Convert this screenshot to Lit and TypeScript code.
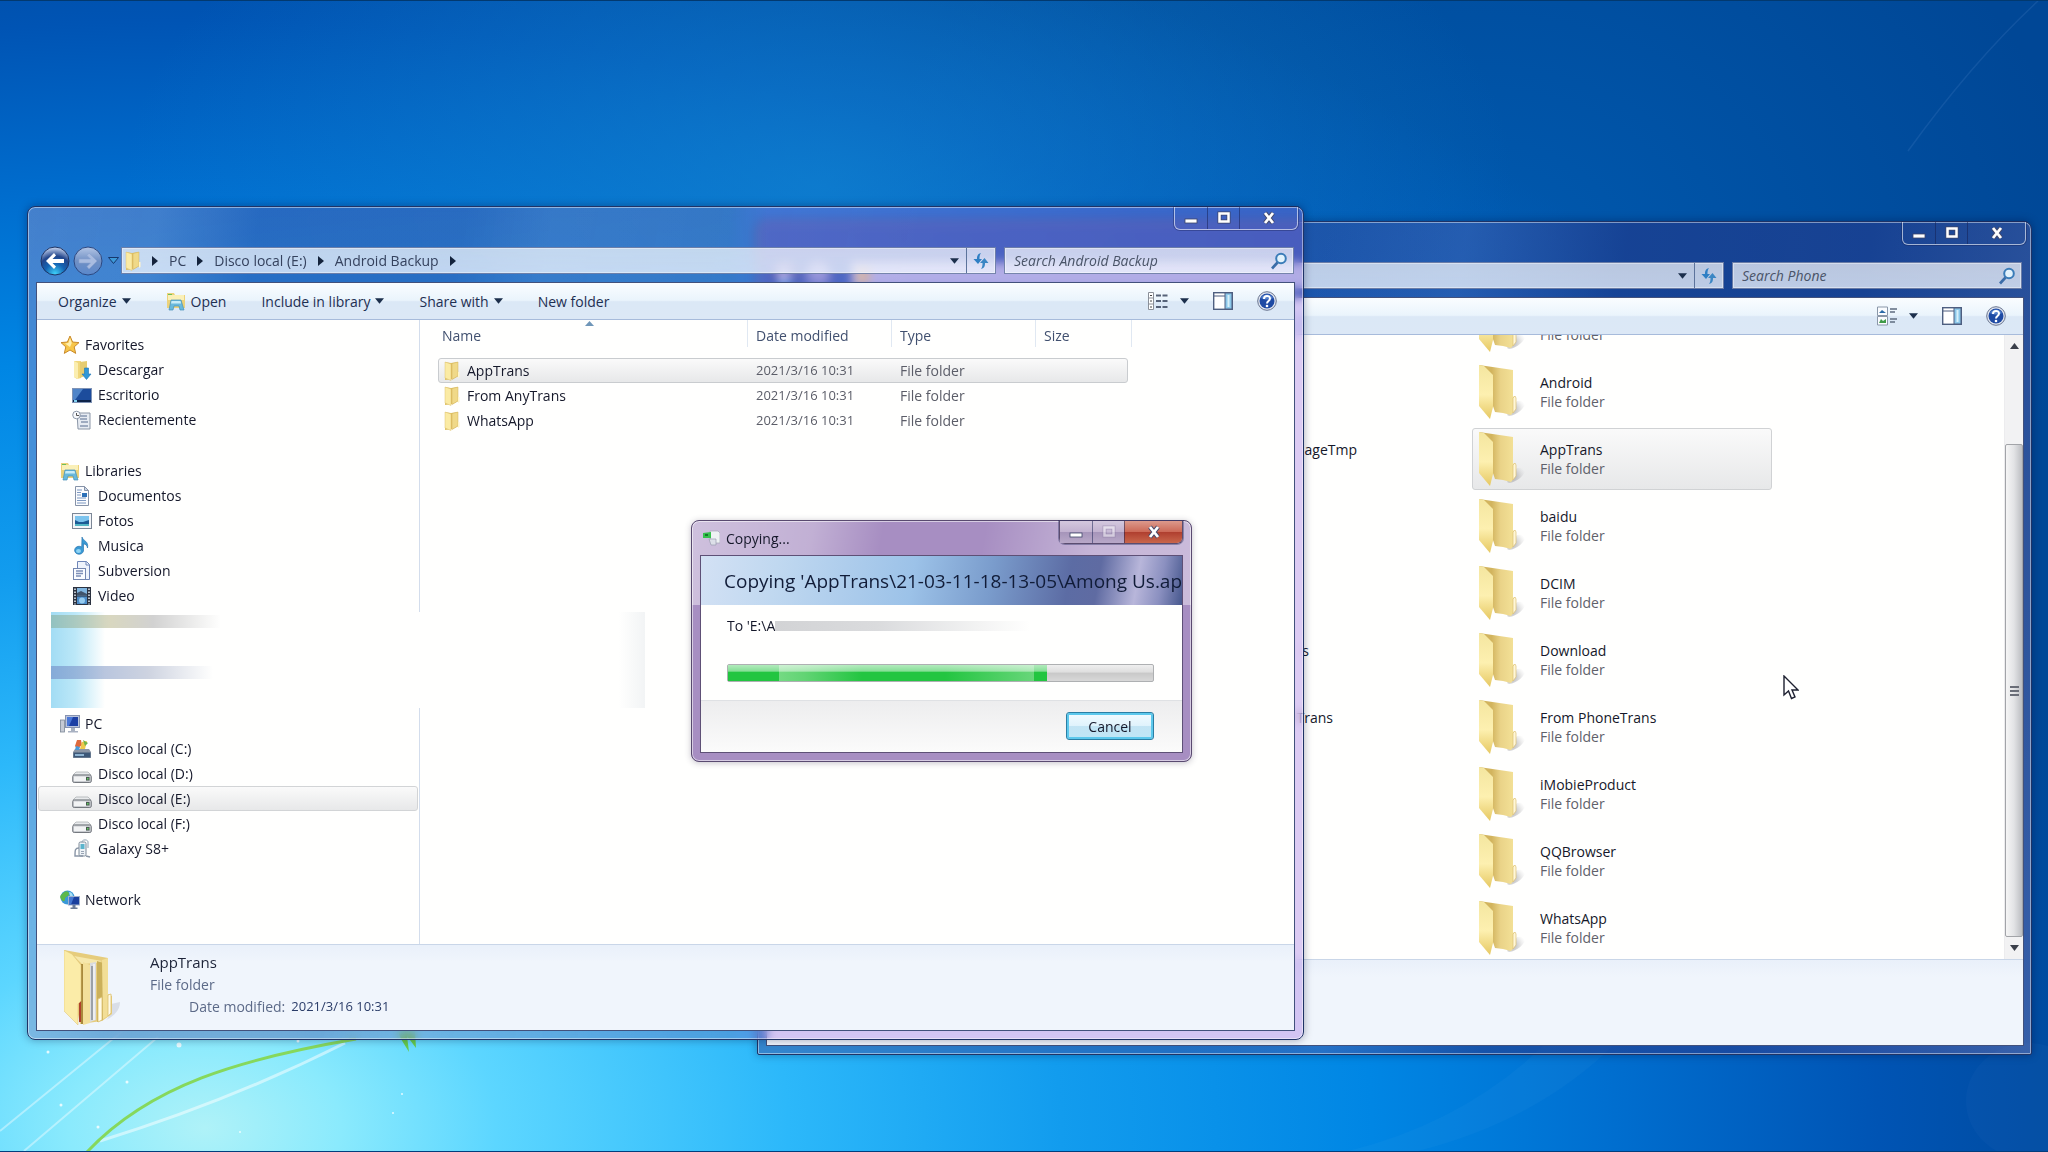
import { LitElement, html, svg, css, nothing, TemplateResult } from "lit";
import { customElement, state } from "lit/decorators.js";
import { classMap } from "lit/directives/class-map.js";

type Row = { icon: string; label: string; root?: boolean };

const FAVORITES: Row[] = [
  { icon: "star", label: "Favorites", root: true },
  { icon: "download", label: "Descargar" },
  { icon: "desktop", label: "Escritorio" },
  { icon: "recent", label: "Recientemente" },
];
const LIBRARIES: Row[] = [
  { icon: "library", label: "Libraries", root: true },
  { icon: "doc", label: "Documentos" },
  { icon: "photo", label: "Fotos" },
  { icon: "music", label: "Musica" },
  { icon: "subversion", label: "Subversion" },
  { icon: "video", label: "Video" },
];
const COMPUTER: Row[] = [
  { icon: "pc", label: "PC", root: true },
  { icon: "system", label: "Disco local (C:)" },
  { icon: "drive", label: "Disco local (D:)" },
  { icon: "drive", label: "Disco local (E:)" },
  { icon: "drive", label: "Disco local (F:)" },
  { icon: "phone", label: "Galaxy S8+" },
];
const NETWORK: Row[] = [{ icon: "network", label: "Network", root: true }];

const FILES = ["AppTrans", "From AnyTrans", "WhatsApp"];

// Each row holds the tail of the covered first column (with its right edge) and the second column's folder.
const TILES: { tail?: string; edge?: number; name: string }[] = [
  { name: "" },
  { name: "Android" },
  { name: "AppTrans", tail: "ageTmp", edge: 590 },
  { name: "baidu" },
  { name: "DCIM" },
  { name: "Download", tail: "s", edge: 542 },
  { name: "From PhoneTrans", tail: "Trans", edge: 566 },
  { name: "iMobieProduct" },
  { name: "QQBrowser" },
  { name: "WhatsApp" },
];

const GLYPHS: Record<string, TemplateResult> = {
  star: svg`<path d="M10 1l2.600 6 6.400.6-4.800 4.300 1.500 6.500L10 15l-5.700 3.400 1.500-6.500L1 7.600 7.400 7z" fill="#f7c64a" stroke="#c98a2b"/><path d="M10 3l1.800 5-1.800 4-5-3.500 3.400-.5z" fill="#fff0b0"/>`,
  download: svg`<path d="M2 1l7 0v17l-4 1-3-2z" fill="#f0d77c"/><path d="M2 1l4 2v16l-4-2z" fill="#fbeeb0"/><path d="M8 2l7-1v14l-7 3z" fill="#e6cc70"/><path d="M12.500 8h4v6h2.500L14.500 19.500 10 14h2.500z" fill="#2f97d8" stroke="#1d74b4" stroke-width=".6"/>`,
  desktop: svg`<rect x=".5" y="3.500" width="19" height="14" fill="#1c4c9c" stroke="#7f93b5"/><path d="M1 4h10L3 15H1z" fill="#4f84c8"/><path d="M1 15h18v2H1z" fill="#0d2348"/><rect x="2" y="15" width="3" height="2" fill="#7fd0f0"/>`,
  recent: svg`<path d="M5 3h13v16H6z" fill="#e6ebf2" stroke="#8b96a6"/><path d="M8 6h7M8 9h7M9 12h7M8 16h8" stroke="#8796b0" stroke-width="1.400"/><circle cx="4.500" cy="5" r="3.800" fill="#f7f9fc" stroke="#8d98a8"/><path d="M4.500 3v2.500H7" stroke="#555" fill="none"/>`,
  library: svg`<path d="M1 2h7l1 2h10v13H1z" fill="#ecd27a"/><path d="M2 4h16v5H2z" fill="#faf0b8"/><path d="M2 3h4v1H2z" fill="#6cbf5a"/><path d="M5 9h10l3 10h-4l-1-4H8l-1 4H3z" fill="#68b9dc" stroke="#4890b8" stroke-width=".7"/><path d="M5.500 10h9l.6 2.500H5z" fill="#c7ecf8"/>`,
  doc: svg`<path d="M3.500.5h9l4 4v15h-13z" fill="#fbfcfe" stroke="#8693a8"/><path d="M12.500.5v4h4z" fill="#cbd6e6" stroke="#8693a8"/><path d="M5 4h5M5 6.500h4M5 9h4M5 12h9M5 14.500h9M5 17h9" stroke="#7d98c0"/><rect x="10" y="7" width="5" height="4" fill="#2b70b8"/>`,
  photo: svg`<rect x=".5" y="2.500" width="19" height="15" fill="#f3f5f8" stroke="#7c8796"/><rect x="3" y="5" width="14" height="10" fill="#7cc4ee"/><path d="M3 9l4 2 4 0 6-2v6H3z" fill="#1c5a94"/><path d="M3 13h14v2H3z" fill="#53b6c4"/>`,
  music: svg`<path d="M10 1c1 4 7 4 5.500 11-.5-3-2-4-4-4v7a4.500 4 0 1 1-1.800-4z" fill="#3a9ad4" stroke="#1f6ca8" stroke-width=".6"/><ellipse cx="6.500" cy="15" rx="2.500" ry="2" fill="#8fd4f4"/>`,
  subversion: svg`<path d="M5.500.5h9l3 3v15h-12z" fill="#eef3fb" stroke="#6f86b8"/><path d="M14 .5v3.500h3.500" fill="none" stroke="#6f86b8"/><rect x="1.500" y="7.500" width="12" height="11" fill="#fafcff" stroke="#7487b0"/><path d="M4 10h7M4 12.500h7M4 15h5" stroke="#7d8fb8" stroke-width="1.400"/>`,
  video: svg`<rect x="1" y="1" width="18" height="18" fill="#2b3240"/><rect x="5" y="2" width="10" height="7.500" fill="#7fb5e0"/><rect x="5" y="10.500" width="10" height="7.500" fill="#4c8cc8"/><path d="M5 7l4-2 6 3v1.500H5z" fill="#40546c"/><circle cx="10" cy="14.500" r="3" fill="#96ccf0"/><path d="M3 2.500v16M17 2.500v16" stroke="#dfe6ee" stroke-width="1.600" stroke-dasharray="1.500 1.500"/>`,
  pc: svg`<rect x=".5" y="6" width="4" height="12" fill="#c5cad4" stroke="#7c8796" stroke-width=".8"/><rect x="5.500" y="1.500" width="14" height="12" fill="#b9c4dc" stroke="#8793b0"/><rect x="7" y="3" width="11" height="9" fill="#1c3fa4"/><path d="M7 3h6l-4 9H7z" fill="#4a77d6"/><path d="M11 14h4v3h3v1.500H8V17h3z" fill="#a9b2c2"/>`,
  system: svg`<path d="M3 10h14l2 3v6H1v-6z" fill="#8b95a4"/><path d="M1.500 13.500h17v5h-17z" fill="#3d5878"/><path d="M3 16h9" stroke="#a8d0ee" stroke-width="1.500"/><path d="M5 1l4 0 1 5-5 4-2-3z" fill="#de6a3c"/><path d="M10 3l5-1-2 8H8z" fill="#edc94c"/><path d="M11 1l5 3-3 3z" fill="#74b54a"/><path d="M4 7l4 1-1 3H3z" fill="#4a9ad8"/>`,
  drive: svg`<path d="M4 8h12l3 3H1z" fill="#e8eaec" stroke="#a5a9ae" stroke-width=".7"/><rect x=".7" y="11" width="18.600" height="7.500" rx="1.500" fill="#c9ccd0" stroke="#75797f"/><path d="M2 12.500h12v4.500H2z" fill="#f2f3f4"/><rect x="14" y="13" width="3.500" height="3.500" fill="#4a5a50"/><rect x="15" y="14" width="1.500" height="1.500" fill="#5fd060"/>`,
  phone: svg`<rect x="7" y="3" width="7" height="14" rx="1.500" fill="#edf2f6" stroke="#7d8a98"/><path d="M10 3c0-3 7-3 6 1v5" fill="none" stroke="#8ea0b0"/><rect x="8.500" y="5" width="4" height="5" fill="#5bb4cc"/><path d="M7 9c-4 0-4 2-4 8h8M14 17l4 1" fill="none" stroke="#8a96a6" stroke-width="1.400"/><path d="M9 12.500h3M9 14.500h3" stroke="#98a4b4"/>`,
  network: svg`<circle cx="7.500" cy="7.500" r="7" fill="#3a98d8"/><path d="M3 3c3-3 6-2 6 1s-4 2-4 5-2 3-4 0 0-4 2-6z" fill="#5cb84a"/><path d="M9 2c3 0 4 3 4 5l-3-1z" fill="#a8e0f4"/><rect x="8.500" y="6.500" width="11" height="8.500" fill="#193f9e" stroke="#9fb0cc"/><path d="M9 7h5l-3 7.500H9z" fill="#4276d0"/><path d="M12.500 15h3v2.500h2V19h-7v-1.500h2z" fill="#6b7c98"/>`,
  folder: svg`<path d="M3 1l6 1 7-1v14l-5 3-8 1z" fill="#dfc060"/><path d="M3 1l6 2v16.500L3 17z" fill="#fbeba4" stroke="#dcc070" stroke-width=".5"/><path d="M10 2.500l6-1.500v14l-6 3.500z" fill="#f0d988" stroke="#d0b25c" stroke-width=".5"/><path d="M16 11h1.500v5L16 17z" fill="#fff6cc"/>`,
};

const icon = (name: string) =>
  html`<svg class="icon" viewBox="0 0 20 20" aria-hidden="true">${GLYPHS[name]}</svg>`;

const down = html`<svg class="down" viewBox="0 0 10 6" aria-hidden="true"><path d="M0 0h10L5 6z" fill="#1c2f4c"/></svg>`;
const crumbArrow = html`<svg class="crumb-arrow" viewBox="0 0 6 10" aria-hidden="true"><path d="M0 0l6 5-6 5z" fill="#14233c"/></svg>`;

const bigFolder = html`<svg class="big-folder" viewBox="0 0 48 56" aria-hidden="true">
  <defs>
    <linearGradient id="flap" x1="0" y1="0" x2="0" y2="1"><stop offset="0" stop-color="#f4e6a0"/><stop offset=".55" stop-color="#fdf0b0"/><stop offset="1" stop-color="#e6c862"/></linearGradient>
    <linearGradient id="back" x1="0" y1="0" x2="1" y2="0"><stop offset=".35" stop-color="#d2b45e"/><stop offset=".6" stop-color="#ead388"/><stop offset="1" stop-color="#f4e298"/></linearGradient>
    <radialGradient id="cast" cx=".2" cy=".6" r=".8"><stop offset="0" stop-color="#7c7c80" stop-opacity=".7"/><stop offset="1" stop-color="#b0b0b4" stop-opacity="0"/></radialGradient>
  </defs>
  <path d="M28 51l10-14 9-1c1 6-8 15-17 16z" fill="url(#cast)"/>
  <path d="M0 1l34 5v26l2 2v12l-4 5-8-2-8-1z" fill="url(#back)"/>
  <path d="M34 34l2-2 1 2v11l-3 4z" fill="#fff7d8" stroke="#dcc074" stroke-width=".7"/>
  <path d="M0 1l5 1 9 9v32l-3 12L0 42z" fill="url(#flap)"/>
</svg>`;

const fullFolder = html`<svg class="full-folder" viewBox="0 0 56 76" aria-hidden="true">
  <path d="M44 68l3-14 9-2c0 8-6 14-14 18z" fill="#bcc4d0" opacity=".45"/>
  <path d="M0 0l44 8v36l4 2v18l-10 7-22 3z" fill="#e6cc7c"/>
  <path d="M10 6l28 5-6 2-14 1z" fill="#f6e8ac"/>
  <path d="M17 14h2v60h-2z" fill="#a98a3c"/>
  <path d="M15 48h2v24h-2z" fill="#b0402c"/>
  <path d="M19 12l7 3v58l-7 2z" fill="#f3e09a"/>
  <path d="M26 13l6-1v58l-6 2z" fill="#d9dbde"/>
  <path d="M28 16v54" stroke="#9aa0a8" stroke-width="2"/>
  <path d="M30 14v56" stroke="#f4f4f4" stroke-width="1.500"/>
  <path d="M33 11l6 2v57l-6 2z" fill="#cbb05a"/>
  <path d="M38 10l6-2v58l-5 3z" fill="#f2de96"/>
  <path d="M34 49l4-2v23l-4 2zM44 45l3-1v19l-3 3z" fill="#fffbe8" stroke="#dcc070" stroke-width=".8"/>
  <path d="M0 0l8 4 9 11v36l-3 3v21L0 61z" fill="#fbeca8" stroke="#dcc070" stroke-width=".5"/>
</svg>`;

@customElement("app-root")
export class AppRoot extends LitElement {
  @state() private drive = "Disco local (E:)";
  @state() private file = "AppTrans";
  @state() private progress = 75;

  static styles = css`
    :host {
      display: block;
      position: relative;
      height: 100vh;
      overflow: hidden;
      box-sizing: border-box;
      border-top: 1px solid #02396f;
      border-bottom: 1px solid #023e7c;
      font: 14px/19px "Open Sans", "Noto Sans", sans-serif;
      color: #15182a;
      background:
        radial-gradient(ellipse 34% 34% at 40% 16%, rgba(22, 140, 214, 0.6), rgba(22, 140, 214, 0) 100%),
        radial-gradient(ellipse 30% 40% at 72% 22%, rgba(0, 108, 200, 0.5), rgba(0, 108, 200, 0) 100%),
        radial-gradient(ellipse 95% 112% at 10% 98%, #aff2f8 0%, #8aeafd 7%, #5cd6ff 15%, #2cb8fa 30%, #129cee 44%, #0086e4 60%, #006fd0 72%, #0054b4 86%, #004796 100%);
    }
    *, *::before, *::after { box-sizing: border-box; }
    button, input { font: inherit; color: inherit; margin: 0; }
    button { border: 0; padding: 0; background: none; }
    a { color: inherit; text-decoration: none; }
    svg { display: block; flex: none; }
    .stalk { position: absolute; left: 0; bottom: 0; width: 460px; height: 140px; }
    .streaks { position: absolute; right: 0; top: 0; width: 300px; height: 200px; }
    .beam { position: absolute; right: 0; bottom: 0; width: 700px; height: 110px; }

    .window {
      position: absolute;
      display: flex;
      flex-direction: column;
      border: 1px solid #1f3366;
      border-radius: 8px;
      box-shadow: inset 0 0 0 1px rgba(255, 255, 255, 0.45), 0 0 8px rgba(0, 10, 50, 0.35);
    }
    .front {
      left: 27px; top: 205px; right: 744px; bottom: 111px;
      background:
        linear-gradient(100deg, rgba(255, 255, 255, 0.12) 0, rgba(255, 255, 255, 0.1) 130px, rgba(0, 40, 140, 0.1) 230px, rgba(0, 40, 140, 0.1) 430px, rgba(255, 255, 255, 0.04) 520px, rgba(255, 255, 255, 0) 900px),
        linear-gradient(90deg, rgba(110, 110, 180, 0.38) 0, rgba(110, 110, 180, 0.38) 700px, rgba(155, 106, 224, 0.35) 740px);
      backdrop-filter: blur(5px);
    }
    .back {
      left: 757px; top: 220px; right: 16px; bottom: 96px;
      background:
        linear-gradient(100deg, rgba(255, 255, 255, 0) 560px, rgba(80, 140, 220, 0.18) 700px, rgba(0, 20, 100, 0.2) 860px, rgba(0, 20, 100, 0.15) 1100px, rgba(255, 255, 255, 0.12) 100%),
        rgba(60, 70, 150, 0.45);
      border-radius: 8px 8px 2px 2px;
    }
    .caption { display: flex; justify-content: flex-end; align-items: flex-start; height: 40px; padding-right: 5px; }
    .caption-box {
      display: flex; height: 23px; border: 1px solid rgba(255, 255, 255, 0.6); border-top: 0;
      border-radius: 0 0 6px 6px; box-shadow: 0 0 0 1px rgba(20, 30, 80, 0.35);
    }
    .cap { display: grid; place-items: center; width: 32px; }
    .cap + .cap { border-left: 1px solid rgba(20, 30, 80, 0.5); }
    .cap.close { width: 58px; }
    .nav { display: flex; align-items: center; height: 27px; margin-bottom: 8px; padding: 0 9px 0 12px; }
    .round { width: 30px; height: 30px; margin-right: 3px; }
    .history { display: grid; place-items: center; width: 14px; height: 20px; margin-right: 1px; }
    .address, .search {
      display: flex; align-items: center; height: 27px;
      background: linear-gradient(rgba(255, 255, 255, 0.7), rgba(240, 246, 255, 0.76));
      border: 1px solid rgba(70, 90, 140, 0.7); box-shadow: inset 0 0 0 1px rgba(255, 255, 255, 0.4);
    }
    .address { flex: 1; padding-left: 1px; color: #35425e; min-width: 0; }
    .address .icon { margin-right: 9px; }
    .crumb { display: flex; align-items: center; gap: 11px; margin-right: 11px; }
    .crumb-arrow { width: 6px; height: 10px; }
    .crumb-first { margin-right: 11px; }
    .spacer { flex: 1; }
    .drop { display: grid; place-items: center; width: 24px; height: 25px; }
    .refresh { display: grid; place-items: center; width: 29px; height: 25px; border-left: 1px solid #5c739c; }
    .search { width: 290px; margin-left: 8px; padding: 0 5px 0 9px; }
    .search-input { flex: 1; min-width: 0; border: 0; padding: 0; background: none; outline: 0; font-style: italic; }
    .search-input::placeholder { color: #4a5468; opacity: 1; }
    .lens { width: 18px; height: 18px; }
    .content {
      flex: 1; min-height: 0; display: flex; flex-direction: column; margin: 0 8px 8px;
      border: 1px solid #42517c; background: #fffffe; overflow: hidden;
    }
    .back .content { margin-right: 7px; }
    .toolbar {
      display: flex; align-items: center; gap: 35px; height: 37px; flex: none; padding: 0 17px 0 21px; color: #1e2f52;
      background: linear-gradient(#fafdff 0, #eaf4fc 48%, #dbe8f6 52%, #dce8f6 100%);
      border-bottom: 1px solid #a7bbdb;
    }
    .tool { display: flex; align-items: center; gap: 5px; white-space: nowrap; }
    .down { width: 9px; height: 6px; }
    .views { display: flex; align-items: center; gap: 24px; margin-left: auto; }
    .view { display: flex; align-items: center; gap: 12px; }
    .body { flex: 1; min-height: 0; display: flex; }
    .icon { width: 20px; height: 20px; }

    .sidebar { width: 383px; flex: none; padding-top: 12px; border-right: 1px solid #d3ddec; position: relative; }
    .group { margin: 0 1px 26px; padding: 0; list-style: none; }
    .group.tight { margin-bottom: 4px; }
    .node {
      display: flex; align-items: center; gap: 6px; height: 25px; padding-left: 33px;
      border: 1px solid transparent; border-radius: 3px; white-space: nowrap;
    }
    .node.root { padding-left: 21px; gap: 5px; }
    .selected { border-color: #d2d4d6; background: linear-gradient(#fafafa, #e7e8e9); }
    .smear {
      position: relative; width: 594px; height: 96px; margin: 0 0 3px 14px;
      background:
        linear-gradient(90deg, rgba(120, 150, 205, 0.7), rgba(165, 175, 200, 0.55) 60%, rgba(200, 205, 215, 0)) 0 54px / 162px 13px no-repeat,
        linear-gradient(90deg, rgba(140, 185, 175, 0.75), rgba(200, 198, 165, 0.7) 35%, rgba(190, 190, 190, 0.7) 60%, rgba(210, 210, 210, 0)) 0 3px / 170px 13px no-repeat,
        linear-gradient(90deg, rgba(243, 245, 246, 0), #f2f4f5) 100% 0 / 26px 96px no-repeat,
        linear-gradient(90deg, #a2dcf4, #bce8f8 45%, rgba(255, 255, 254, 0)) 0 0 / 54px 96px no-repeat,
        #fffffe;
    }
    .files { flex: 1; padding-left: 18px; min-width: 0; }
    .table { display: block; border-spacing: 0; width: 694px; }
    .thead, .tbody { display: block; }
    .tr { display: grid; grid-template-columns: 310px 144px 144px 1fr; align-items: center; }
    .thead .tr { height: 31px; margin-bottom: 7px; color: #41506f; position: relative; }
    .th { font-weight: normal; text-align: left; padding: 6px 0 0 8px; height: 27px; align-self: start; border-right: 1px solid #e0e8f2; }
    .th:first-child { padding-left: 4px; }
    .sort { position: absolute; left: 147px; top: 1px; width: 9px; height: 5px; }
    .tbody .tr { width: 690px; height: 25px; border: 1px solid transparent; border-radius: 3px; }
    .tbody .tr.selected { border-color: #c9cccf; }
    .td { padding: 0 0 0 7px; color: #5b5d68; }
    .td:first-child { display: flex; align-items: center; gap: 5px; padding-left: 3px; color: #15182a; }
    .date { font-size: 13px; }
    .details {
      flex: none; height: 86px; display: flex; align-items: flex-start; gap: 30px; padding: 5px 0 0 27px;
      border-top: 1px solid #c9d6e8; background: linear-gradient(#e9f0fa, #f0f5fc 20%, #f0f5fc);
    }
    .full-folder { width: 56px; height: 76px; }
    .facts { display: grid; row-gap: 3px; margin: 3px 0 0; color: #5c6a88; }
    .fact-name { font-size: 15px; color: #1c2338; }
    .fact-date { display: flex; gap: 6px; padding-left: 39px; }
    .fact-value { color: #2a3c68; font-size: 13px; }

    .tiles {
      flex: 1; min-width: 0; overflow: hidden; display: grid; grid-template-columns: 705px 300px;
      grid-auto-rows: 62px; row-gap: 5px; align-content: end;
    }
    .tail { padding-top: 12px; text-align: right; }
    .tile {
      grid-column: 2; display: flex; align-items: center; gap: 13px; padding-left: 6px;
      border: 1px solid transparent; border-radius: 3px;
    }
    .tile.selected { border-color: #d0d2d4; }
    .big-folder { width: 48px; height: 56px; }
    .tile-name, .tile-kind { display: block; min-height: 19px; text-align: left; }
    .tile-kind { color: #5f616b; }
    .scrollbar { width: 19px; display: flex; flex-direction: column; align-items: center; background: #f2f2f3; border-left: 1px solid #ececee; }
    .scroll-end { display: grid; place-items: center; height: 22px; width: 100%; }
    .scroll-gap { height: 87px; }
    .thumb {
      flex: 1; width: 100%; display: grid; place-items: center; border: 1px solid #a2a4a8; border-radius: 2px;
      background: linear-gradient(90deg, #f6f6f6, #e2e3e5 50%, #bcbec2);
    }

    .dialog {
      position: absolute; left: 691px; top: 519px; width: 501px; padding: 0 8px 8px;
      border: 1px solid #594a70; border-radius: 8px;
      box-shadow: inset 0 0 0 1px rgba(255, 255, 255, 0.55), 0 1px 6px rgba(60, 50, 80, 0.3);
      background:
        linear-gradient(100deg, rgba(255, 255, 255, 0.45) 0, rgba(255, 255, 255, 0.3) 120px, rgba(255, 255, 255, 0) 190px, rgba(255, 255, 255, 0) 290px, rgba(255, 255, 255, 0.35) 400px, rgba(255, 255, 255, 0.4)) 0 0 / 100% 84px no-repeat,
        #a78ec2;
    }
    .dialog-bar { display: flex; height: 34px; padding-left: 2px; }
    .dialog-title { display: flex; align-items: center; gap: 6px; flex: 1; margin: 0; font-size: 14px; font-weight: normal; }
    .dialog .caption-box { border-color: #5b4d70; }
    .dialog .close { background: linear-gradient(#dc9a8c 0, #cc6a58 48%, #b04030 52%, #c9664c 100%); border-radius: 0 0 5px 0; }
    .dialog .cap:not(.close) { background: linear-gradient(#d4c8de 0, #c2b2d0 48%, #a695ba 52%, #b8a8c8 100%); }
    .dialog-body { border: 1px solid #5e5076; background: #fffffe; }
    .banner {
      height: 49px; padding: 0 0 0 23px; margin: 0; white-space: nowrap; font-size: 19px; font-weight: normal; line-height: 50px; color: #111c38;
      background: linear-gradient(100deg, #d3e1f4 0, #c0d8f0 16%, #9cc2e8 44%, #7a9ccc 60%, #5c6ca4 76%, #5f6ba2 82%, #b8b6da 90%, #8b90c0 95%, #47588e 100%);
    }
    .transfer { height: 95px; padding: 11px 28px 0 26px; }
    .to { display: flex; align-items: center; height: 19px; margin: 0 0 29px; }
    .to-smear { width: 255px; height: 10px; background: linear-gradient(90deg, #d2d3d5, #dadbdd 40%, #fffffe); }
    .progress {
      height: 18px; border: 1px solid #aeb0b2; border-radius: 2px;
      background: linear-gradient(#efefef 0, #dedede 45%, #c8c8c8 50%, #d8d8d8 100%);
    }
    .fill {
      height: 100%;
      background:
        linear-gradient(rgba(255, 255, 255, 0.65), rgba(255, 255, 255, 0.45) 38%, rgba(255, 255, 255, 0) 46%),
        linear-gradient(90deg, #22c540 0, #22c540 16%, #74da83 16%, #62d474 24%, #23c541 42%, #23c541 68%, #68d67a 96%, #22c540 96%);
    }
    .dialog-foot { display: flex; justify-content: flex-end; height: 52px; padding: 11px 28px 0; background: linear-gradient(#ededee, #fbfbfb); border-top: 1px solid #dfe1e4; }
    .cancel {
      width: 88px; height: 28px; border: 1px solid #2b7ea4; border-radius: 3px;
      background: linear-gradient(#f2fbff 0, #e0f3fc 48%, #c2e4f4 52%, #bfe6f6 100%);
      box-shadow: inset 0 0 0 2px #5cc8ec;
    }
    .cursor { position: absolute; left: 1783px; top: 674px; width: 16px; height: 25px; }
  `;

  private captions(muted = false) {
    return html`<div class="caption-box">
      <button class="cap" aria-label="Minimize"><svg width="14" height="14" viewBox="0 0 14 14"><rect x="1" y="8" width="12" height="4" fill="#fff" stroke="#3d4468" stroke-width=".8"/></svg></button>
      <button class="cap" aria-label="Maximize"><svg width="14" height="14" viewBox="0 0 14 14" opacity=${muted ? 0.5 : 1}><rect x="2.500" y="2.500" width="9" height="8" fill=${muted ? "#cfc4dc" : "none"} stroke=${muted ? "#8a7ca2" : "#3d4468"} stroke-width="4"/><rect x="2.500" y="2.500" width="9" height="8" fill="none" stroke="#fff" stroke-width="2.500"/></svg></button>
      <button class="cap close" aria-label="Close"><svg width="16" height="14" viewBox="0 0 16 14"><path d="M4 2l8 10M12 2l-8 10" stroke="#444a6c" stroke-width="4.500"/><path d="M4 2l8 10M12 2l-8 10" stroke="#fff" stroke-width="2.800"/></svg></button>
    </div>`;
  }

  private nav(crumbs: string[], placeholder: string) {
    return html`<div class="nav">
      <button class="round" aria-label="Back"><svg viewBox="0 0 30 30"><defs><radialGradient id="orb" cx=".5" cy=".95" r=".9"><stop offset="0" stop-color="#3fd0f8"/><stop offset=".4" stop-color="#1464b4"/><stop offset=".7" stop-color="#23468c"/><stop offset="1" stop-color="#b4c4e4"/></radialGradient></defs><circle cx="15" cy="15" r="14" fill="url(#orb)" stroke="#1f3564"/><path d="M6 15l8-8 2 2.500-3.500 3.500H24v4H12.500l3.500 3.500-2 2.500z" fill="#fff"/></svg></button>
      <button class="round" aria-label="Forward"><svg viewBox="0 0 30 30"><defs><linearGradient id="orb2" x1="0" y1="0" x2="0" y2="1"><stop offset="0" stop-color="#b4c6e6"/><stop offset=".5" stop-color="#7090c4"/><stop offset="1" stop-color="#5a88cc"/></linearGradient></defs><circle cx="15" cy="15" r="14" fill="url(#orb2)" stroke="#2c4880"/><path d="M24 15l-8-8-2 2.500 3.500 3.500H6v4h11.500L14 20.500l2 2.500z" fill="#a9bce0" stroke="#8ba2d0" stroke-width=".6"/></svg></button>
      <button class="history" aria-label="Recent locations"><svg width="11" height="7" viewBox="0 0 11 7"><path d="M.5.5h10l-5 6z" fill="#3d9ad8" stroke="#17386c"/></svg></button>
      <nav class="address" aria-label="Address">
        ${icon("folder")}
        ${crumbs.length ? html`<span class="crumb-first">${crumbArrow}</span>` : nothing}
        ${crumbs.map((c) => html`<span class="crumb"><a href="#">${c}</a>${crumbArrow}</span>`)}
        <span class="spacer"></span>
        <button class="drop" aria-label="Previous locations">${down}</button>
        <button class="refresh" aria-label="Refresh"><svg width="18" height="18" viewBox="0 0 18 18"><path d="M9 1C5 2 5 5 5 7H1.500L6 12l4-5H7.500c0-2 0-4 1.500-6z" fill="#2f7fc4"/><path d="M9 17c4-1 4-4 4-6h3.500L12.500 6 8 11h2.500c0 2 0 4-1.500 6z" fill="#3a86c4"/></svg></button>
      </nav>
      <label class="search">
        <input class="search-input" type="text" placeholder=${placeholder} aria-label=${placeholder} />
        <svg class="lens" viewBox="0 0 18 18"><circle cx="11" cy="6.500" r="4.800" fill="#e2f2fc" stroke="#3a7cb8" stroke-width="2"/><path d="M7.500 10.500L2 16.500" stroke="#3a6ca8" stroke-width="2.600"/></svg>
      </label>
    </div>`;
  }

  private views(large: boolean) {
    return html`<div class="views">
      <button class="view" aria-label="Change view">
        ${large
          ? html`<svg width="20" height="20" viewBox="0 0 20 20"><path d="M.5 1h10v8.500H.5zM.5 10.500h10V19H.5z" fill="#fafcff" stroke="#8a97a8"/><path d="M2 7l3-3 4 3z" fill="#2a6aa8"/><path d="M2 17l2-4 2 2 3-2v4z" fill="#3f9a48"/><path d="M13 3h7M13 6h5M13 13h7M13 16h5" stroke="#5f6c80" stroke-width="1.500"/></svg>`
          : html`<svg width="20" height="18" viewBox="0 0 20 18"><path d="M.5.5h5v17h-5zM.5 6h5M.5 12h5" fill="#fff" stroke="#8a8f98"/><path d="M2 3.500h2M2 9h2M2 15h2" stroke="#444"/><path d="M8 3.500h12M8 9h12M8 15h12" stroke="#566278" stroke-width="1.800" stroke-dasharray="5 1.500"/></svg>`}
        ${down}
      </button>
      <button aria-label="Preview pane"><svg width="20" height="18" viewBox="0 0 20 18"><rect x=".7" y=".7" width="18.600" height="16.600" fill="#fff" stroke="#4e5f80" stroke-width="1.400"/><path d="M1 4h11" stroke="#4e5f80"/><path d="M12 1h7v16h-7z" fill="#8cc8ea" stroke="#4e5f80"/><path d="M15.500 3v12" stroke="#d6f0fa" stroke-width="2"/></svg></button>
      <button aria-label="Help"><svg width="20" height="20" viewBox="0 0 20 20"><circle cx="10" cy="10" r="9.300" fill="#dfe4ee" stroke="#68748f"/><circle cx="10" cy="10" r="7.500" fill="#1e4aa4"/><path d="M4 7a7 7 0 0 1 12 0c-3 2-9 2-12 0z" fill="#5480cc"/><path d="M7 8c0-4 6-4 6-.5 0 2.500-3 2.500-3 5" fill="none" stroke="#fff" stroke-width="2"/><circle cx="10" cy="15" r="1.300" fill="#fff"/></svg></button>
    </div>`;
  }

  private group(rows: Row[], tight = false) {
    return html`<ul class=${classMap({ group: true, tight })}>
      ${rows.map(
        (r) => html`<li><a href="#" class=${classMap({ node: true, root: !!r.root, selected: r.label === this.drive })}>${icon(r.icon)}<span>${r.label}</span></a></li>`,
      )}
    </ul>`;
  }

  render() {
    return html`
      <svg class="stalk" viewBox="0 0 460 140" aria-hidden="true">
        <path d="M0 120L125 18M24 140L158 26" stroke="#fff" stroke-opacity=".4" stroke-width="2"/>
        <path d="M100 130Q230 90 345 32" stroke="#fff" stroke-opacity=".5" stroke-width="3" fill="none"/>
        <path d="M87 141C150 74 240 48 356 28" stroke="#86d85c" stroke-width="3" fill="none"/>
        <path d="M398 20l3 8 8 13-2-16 9 12-1-17z" fill="#66cc4c"/>
        <g fill="#fff" fill-opacity=".8"><circle cx="179" cy="34" r="2.500"/><circle cx="48" cy="41" r="1.500"/><circle cx="127" cy="71" r="1.500"/><circle cx="61" cy="94" r="1.500"/><circle cx="98" cy="116" r="1.500"/><circle cx="298" cy="30" r="1.500"/><circle cx="402" cy="83" r="1"/><circle cx="393" cy="102" r="1"/><circle cx="240" cy="121" r="1"/></g>
      </svg>
      <svg class="streaks" viewBox="0 0 300 200" aria-hidden="true"><path d="M290 0Q225 60 160 150" stroke="#6a9ad8" stroke-opacity=".16" stroke-width="1.500" fill="none"/></svg>
      <svg class="beam" viewBox="0 0 700 110" aria-hidden="true"><path d="M0 110Q120 80 200 0h70Q190 80 70 110z" fill="#6ab8f4" fill-opacity=".06"/><ellipse cx="680" cy="60" rx="62" ry="58" fill="#3a80d0" fill-opacity=".08"/></svg>

      <section class="window back" aria-label="Phone">
        <div class="caption">${this.captions()}</div>
        ${this.nav([], "Search Phone")}
        <div class="content">
          <div class="toolbar">${this.views(true)}</div>
          <div class="body">
            <div class="tiles">
              ${TILES.map(
                (t) => html`
                  ${t.tail ? html`<div class="tail" style="width:${t.edge}px">${t.tail}</div>` : nothing}
                  <button class=${classMap({ tile: true, selected: t.name === this.file })}>
                    ${bigFolder}
                    <span><span class="tile-name">${t.name}</span><span class="tile-kind">File folder</span></span>
                  </button>
                `,
              )}
            </div>
            <div class="scrollbar" aria-hidden="true">
              <span class="scroll-end"><svg width="9" height="6" viewBox="0 0 9 6"><path d="M0 6h9L4.500 0z" fill="#3a3f4a"/></svg></span>
              <span class="scroll-gap"></span>
              <span class="thumb"><svg width="9" height="10" viewBox="0 0 9 10"><path d="M0 1h9M0 5h9M0 9h9" stroke="#6a6e78" stroke-width="2"/></svg></span>
              <span class="scroll-end"><svg width="9" height="6" viewBox="0 0 9 6"><path d="M0 0h9L4.500 6z" fill="#3a3f4a"/></svg></span>
            </div>
          </div>
          <footer class="details"></footer>
        </div>
      </section>

      <section class="window front" aria-label="Android Backup">
        <div class="caption">${this.captions()}</div>
        ${this.nav(["PC", "Disco local (E:)", "Android Backup"], "Search Android Backup")}
        <div class="content">
          <div class="toolbar">
            <button class="tool">Organize ${down}</button>
            <button class="tool">${icon("library")} Open</button>
            <button class="tool">Include in library ${down}</button>
            <button class="tool">Share with ${down}</button>
            <button class="tool">New folder</button>
            ${this.views(false)}
          </div>
          <div class="body">
            <nav class="sidebar" aria-label="Folders">
              ${this.group(FAVORITES)} ${this.group(LIBRARIES, true)}
              <div class="smear"></div>
              ${this.group(COMPUTER)} ${this.group(NETWORK)}
            </nav>
            <div class="files">
              <table class="table">
                <thead class="thead">
                  <tr class="tr">
                    <th class="th">Name<svg class="sort" viewBox="0 0 9 5"><path d="M0 5h9L4.500 0z" fill="#6f96b8"/></svg></th>
                    <th class="th">Date modified</th>
                    <th class="th">Type</th>
                    <th class="th">Size</th>
                  </tr>
                </thead>
                <tbody class="tbody">
                  ${FILES.map(
                    (f) => html`<tr class=${classMap({ tr: true, selected: f === this.file })}>
                      <td class="td">${icon("folder")}${f}</td>
                      <td class="td date">2021/3/16 10:31</td>
                      <td class="td">File folder</td>
                      <td class="td"></td>
                    </tr>`,
                  )}
                </tbody>
              </table>
            </div>
          </div>
          <footer class="details">
            ${fullFolder}
            <div class="facts">
              <span class="fact-name">AppTrans</span>
              <span>File folder</span>
              <span class="fact-date"><span>Date modified:</span><span class="fact-value">2021/3/16 10:31</span></span>
            </div>
          </footer>
        </div>
      </section>

      <section class="dialog" role="dialog" aria-labelledby="dialog-title">
        <div class="dialog-bar">
          <h1 class="dialog-title" id="dialog-title">
            <svg width="18" height="16" viewBox="0 0 18 16" aria-hidden="true"><path d="M8 1h8l2 2v10H9z" fill="#eef2f4" stroke="#a4a8b8" stroke-width=".7"/><path d="M1 3l8-1v6H1z" fill="#35c24c"/><path d="M3 4h3v2H3z" fill="#157a2c"/><path d="M7 9h7v6H9z" fill="#dcdfe8" stroke="#9a9cb0" stroke-width=".7"/></svg>
            Copying...
          </h1>
          ${this.captions(true)}
        </div>
        <div class="dialog-body">
          <h2 class="banner">Copying 'AppTrans\\21-03-11-18-13-05\\Among Us.ap</h2>
          <div class="transfer">
            <p class="to">To 'E:\\A<span class="to-smear"></span></p>
            <div class="progress" role="progressbar" aria-label="Copying" aria-valuenow=${this.progress}><div class="fill" style="width:${this.progress}%"></div></div>
          </div>
          <div class="dialog-foot"><button class="cancel">Cancel</button></div>
        </div>
      </section>

      <svg class="cursor" viewBox="0 0 16 25" aria-hidden="true"><path d="M1 1v19l4.500-4 3 7.500 3.500-1.500-3-7H15z" fill="#fff" stroke="#1d2030" stroke-width="1.400"/></svg>
    `;
  }
}
